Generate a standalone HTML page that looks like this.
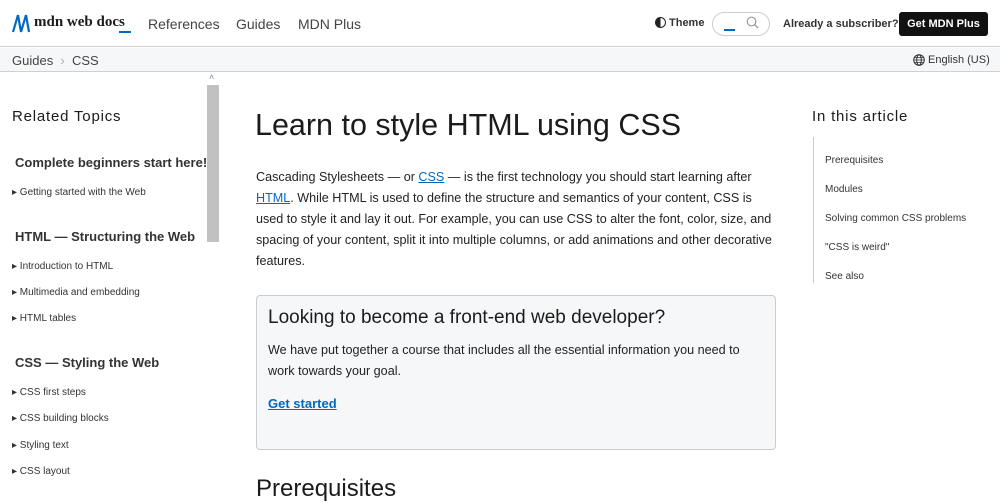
<!DOCTYPE html>
<html><head><style>
*{margin:0;padding:0;box-sizing:border-box}
body{width:1000px;height:500px;overflow:hidden;background:#fff;font-family:"Liberation Sans",sans-serif;color:#1b1b1b;position:relative}
.a{position:absolute;white-space:nowrap}
a{color:#0069c2}
</style></head><body>
<div class="a" style="top:0;left:0;width:1000px;height:47px;border-bottom:1px solid #d0d0d0"></div>
<svg class="a" style="left:12px;top:14px" width="20" height="19" viewBox="0 0 20 19"><path d="M1 18 L6 1 M6 1 L9 18 M9 18 L14 1 M14 1 L17 18" stroke="#0069c2" stroke-width="2.2" fill="none"/></svg>
<div class="a" style="left:34px;top:14px;font-size:15px;font-family:'Liberation Serif',serif;font-weight:bold">mdn web docs</div>
<div class="a" style="left:119px;top:31px;width:12px;height:2px;background:#0069c2"></div>
<div class="a" style="left:148px;top:16px;font-size:14px;color:#444">References</div>
<div class="a" style="left:236px;top:16px;font-size:14px;color:#444">Guides</div>
<div class="a" style="left:298px;top:16px;font-size:14px;color:#444">MDN Plus</div>
<div class="a" style="left:655px;top:17px;width:11px;height:11px;border-radius:50%;border:1.5px solid #222;background:linear-gradient(90deg,#222 50%,#fff 50%)"></div>
<div class="a" style="left:669px;top:17px;font-size:11px;font-weight:bold;color:#333">Theme</div>
<div class="a" style="left:712px;top:12px;width:58px;height:24px;border:1px solid #ccc;border-radius:12px"></div>
<div class="a" style="left:724px;top:29px;width:11px;height:2px;background:#0069c2"></div>
<svg class="a" style="left:746px;top:16px" width="13" height="13" viewBox="0 0 13 13"><circle cx="5.5" cy="5.5" r="4.3" stroke="#999" stroke-width="1.2" fill="none"/><path d="M8.7 8.7 L12 12" stroke="#999" stroke-width="1.3"/></svg>
<div class="a" style="left:783px;top:18px;font-size:11px;font-weight:bold;color:#333">Already a subscriber?</div>
<div class="a" style="left:899px;top:12px;width:89px;height:24px;background:#111;border-radius:3px;color:#fff;font-size:11px;font-weight:bold;text-align:center;line-height:24px">Get MDN Plus</div>
<div class="a" style="top:48px;left:0;width:1000px;height:24px;background:#f6f7f8;border-bottom:1px solid #d0d0d0"></div>
<div class="a" style="left:12px;top:53px;font-size:13px;color:#444">Guides &nbsp;<span style="color:#aaa">›</span>&nbsp; CSS</div>
<svg class="a" style="left:913px;top:54px" width="12" height="12" viewBox="0 0 12 12"><circle cx="6" cy="6" r="5.3" stroke="#333" fill="none"/><ellipse cx="6" cy="6" rx="2.3" ry="5.3" stroke="#333" fill="none"/><path d="M0.7 6H11.3M1.5 3.5H10.5M1.5 8.5H10.5" stroke="#333" stroke-width=".8"/></svg>
<div class="a" style="left:928px;top:54px;font-size:11px;color:#333">English (US)</div>
<div class="a" style="left:207px;top:85px;width:12px;height:157px;background:#c1c1c1"></div>
<div class="a" style="left:209px;top:72px;font-size:9px;color:#888">˄</div>
<div class="a" style="left:12px;top:108px;font-size:15px;letter-spacing:.8px">Related Topics</div>
<div class="a" style="left:15px;top:155px;font-size:13px;font-weight:bold;color:#333">Complete beginners start here!</div>
<div class="a" style="left:12px;top:187px;font-size:10px;color:#333">▸ Getting started with the Web</div>
<div class="a" style="left:15px;top:229px;font-size:13px;font-weight:bold;color:#333">HTML — Structuring the Web</div>
<div class="a" style="left:12px;top:261px;font-size:10px;color:#333">▸ Introduction to HTML</div>
<div class="a" style="left:12px;top:287px;font-size:10px;color:#333">▸ Multimedia and embedding</div>
<div class="a" style="left:12px;top:313px;font-size:10px;color:#333">▸ HTML tables</div>
<div class="a" style="left:15px;top:355px;font-size:13px;font-weight:bold;color:#333">CSS — Styling the Web</div>
<div class="a" style="left:12px;top:387px;font-size:10px;color:#333">▸ CSS first steps</div>
<div class="a" style="left:12px;top:413px;font-size:10px;color:#333">▸ CSS building blocks</div>
<div class="a" style="left:12px;top:440px;font-size:10px;color:#333">▸ Styling text</div>
<div class="a" style="left:12px;top:466px;font-size:10px;color:#333">▸ CSS layout</div>
<div class="a" style="left:255px;top:108px;font-size:30.5px;font-weight:500">Learn to style HTML using CSS</div>
<div class="a" style="left:256px;top:167px;width:522px;white-space:normal;font-size:12.6px;line-height:21px;color:#222">Cascading Stylesheets — or <a href="#">CSS</a> — is the first technology you should start learning after <a href="#">HTML</a>. While HTML is used to define the structure and semantics of your content, CSS is used to style it and lay it out. For example, you can use CSS to alter the font, color, size, and spacing of your content, split it into multiple columns, or add animations and other decorative features.</div>
<div class="a" style="left:256px;top:295px;width:520px;height:155px;background:#f6f7f8;border:1px solid #ccc;border-radius:4px"></div>
<div class="a" style="left:268px;top:307px;font-size:19px">Looking to become a front-end web developer?</div>
<div class="a" style="left:268px;top:340px;width:500px;white-space:normal;font-size:12.6px;line-height:21px;color:#222">We have put together a course that includes all the essential information you need to work towards your goal.</div>
<div class="a" style="left:268px;top:396px;font-size:13px;font-weight:bold"><a href="#">Get started</a></div>
<div class="a" style="left:256px;top:475px;font-size:24px">Prerequisites</div>
<div class="a" style="left:812px;top:108px;font-size:15px;letter-spacing:.8px">In this article</div>
<div class="a" style="left:813px;top:137px;width:1px;height:146px;background:#ccc"></div>
<div class="a" style="left:825px;top:146px;font-size:10px;color:#333;line-height:29px">Prerequisites<br>Modules<br>Solving common CSS problems<br>"CSS is weird"<br>See also</div>
</body></html>
